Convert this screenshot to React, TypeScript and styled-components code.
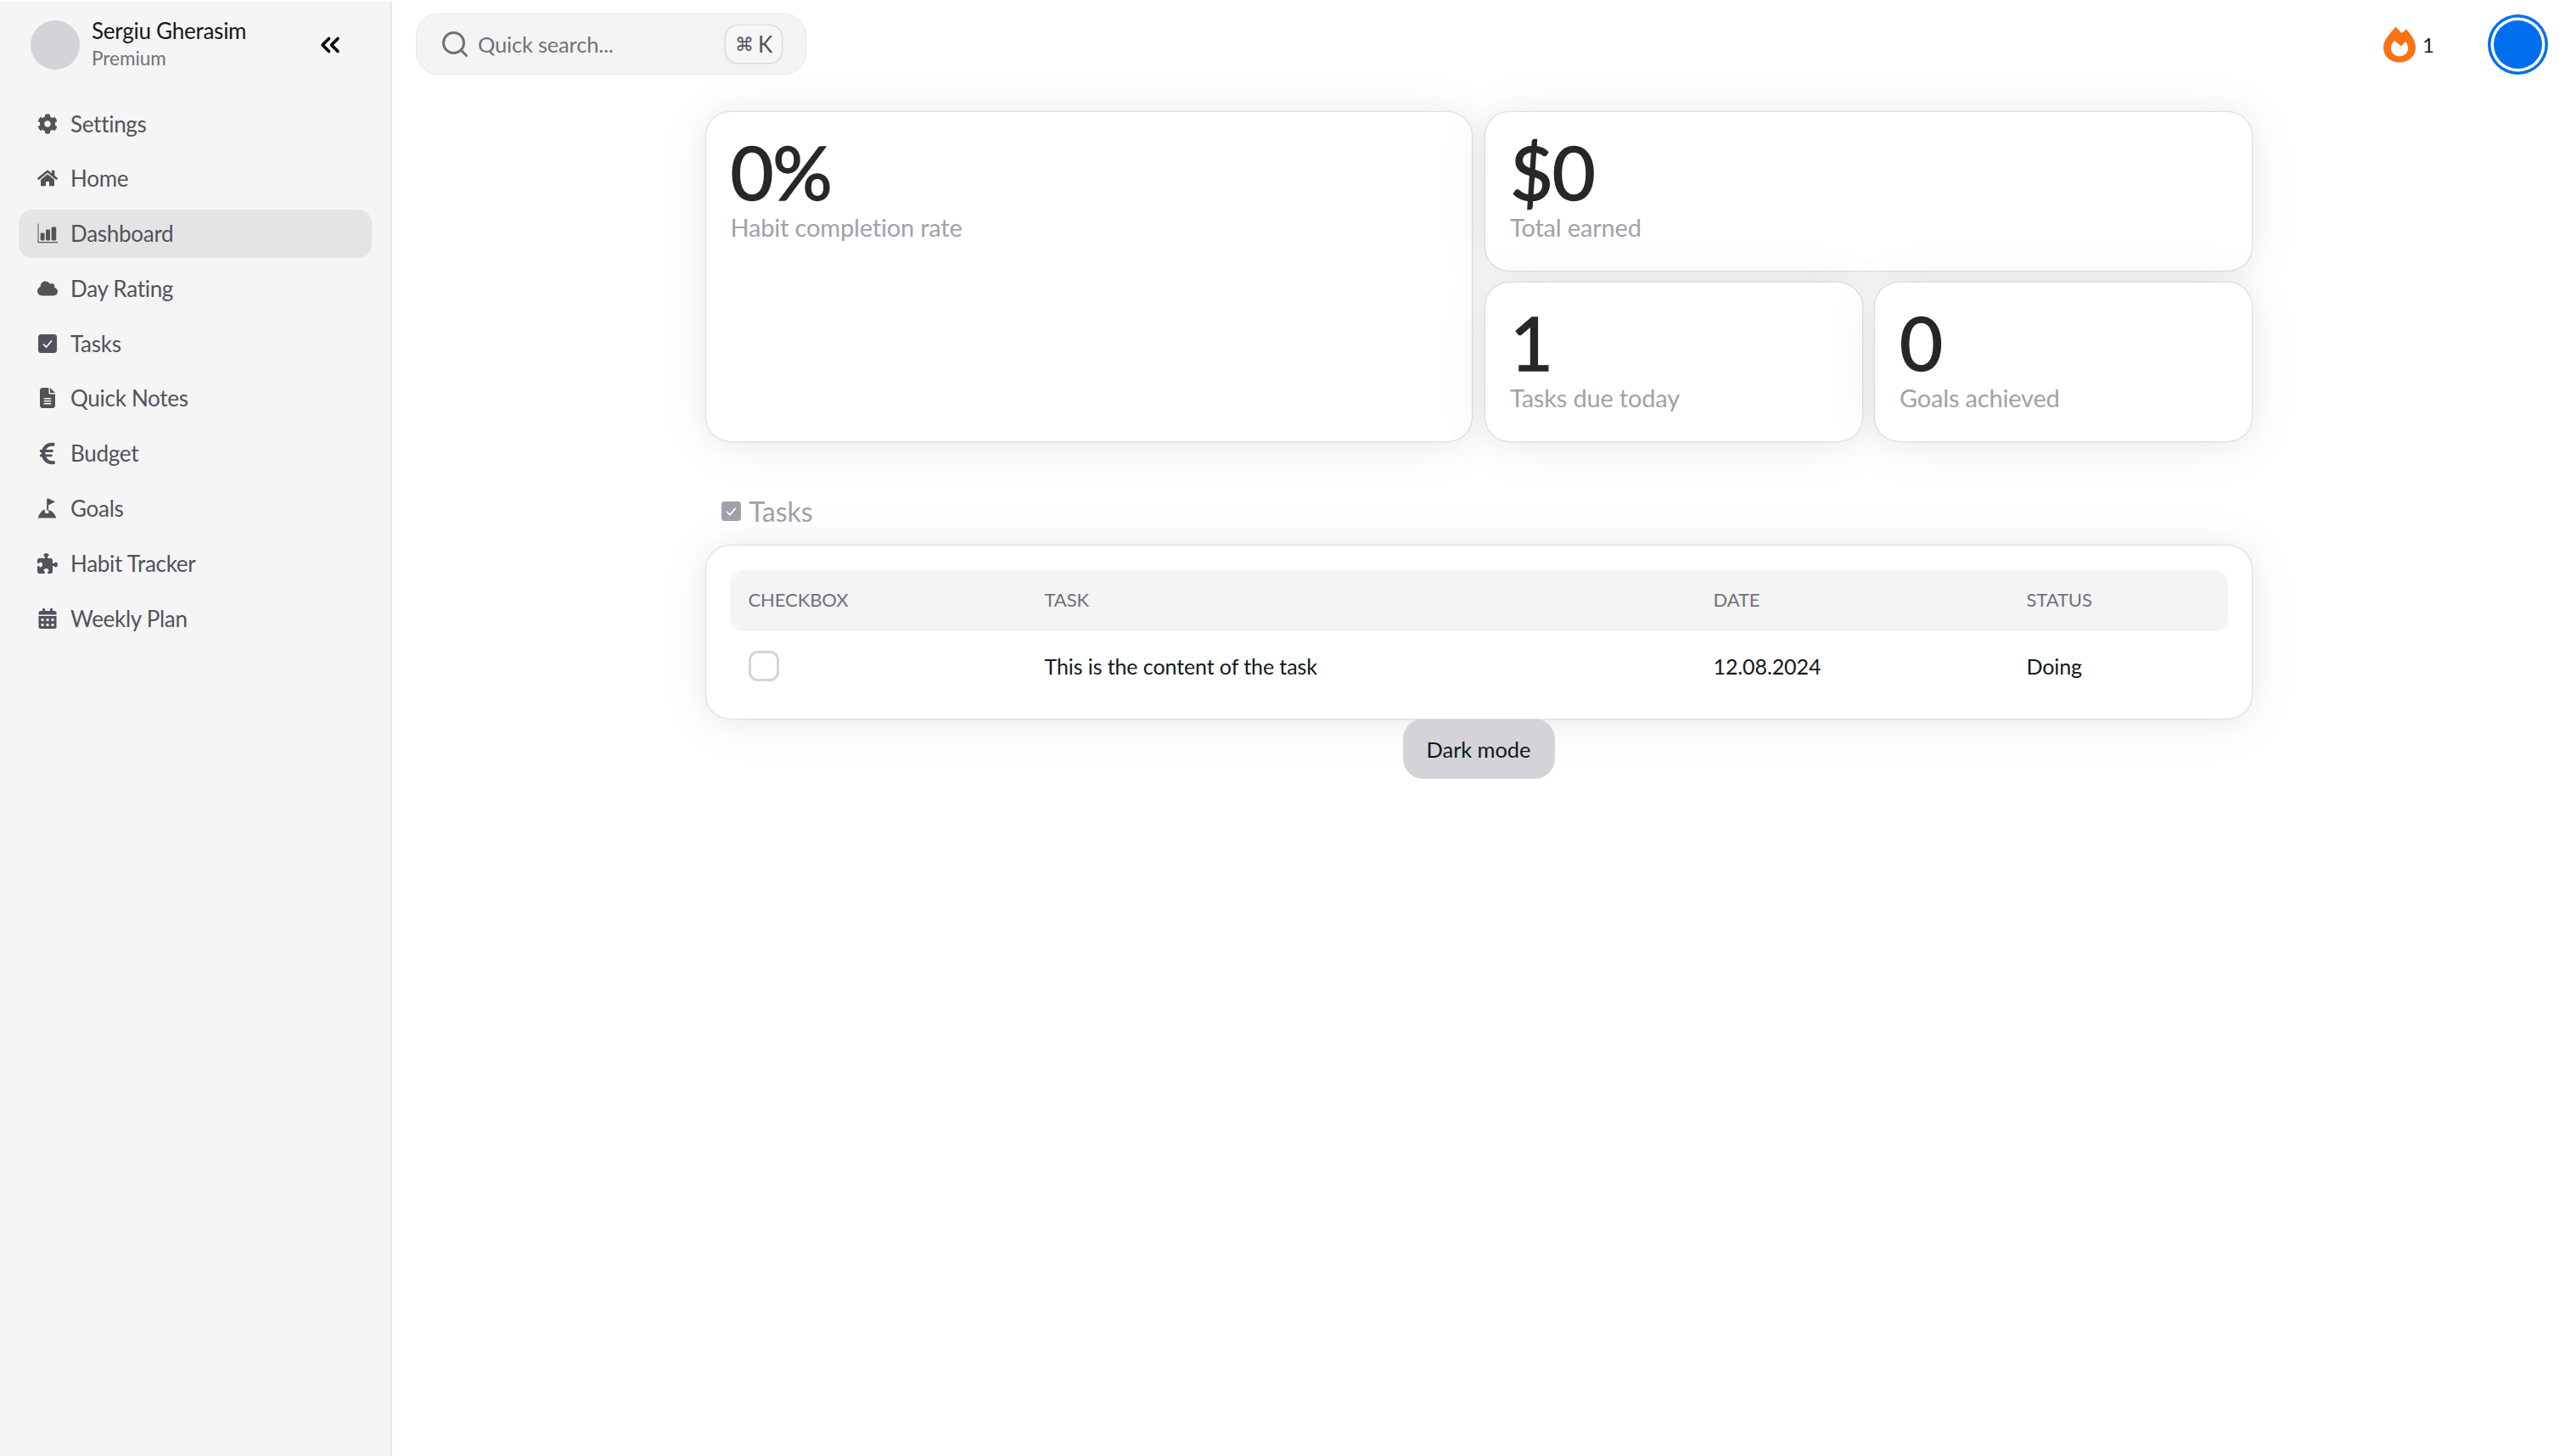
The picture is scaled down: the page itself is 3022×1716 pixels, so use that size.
import React from "react";
import styled, { createGlobalStyle } from "styled-components";
import { ChevronsLeft, Search } from "lucide-react";
import {
  FaCog,
  FaHome,
  FaCloud,
  FaEuroSign,
  FaCalendarAlt,
} from "react-icons/fa";
import { FaPuzzlePiece, FaFileLines } from "react-icons/fa6";

const Global = createGlobalStyle`
  html, body { margin: 0; padding: 0; background: #fff; }
  body { font-family: Lato, "Open Sans", sans-serif; color: #11181c; }
  * { box-sizing: border-box; }
`;

const Page = styled.div`
  display: flex;
  height: 1716px;
  overflow: hidden;
  background: #fff;
`;

const Sidebar = styled.aside`
  width: 462px;
  flex: none;
  margin-top: 2px;
  padding: 22px 22px 0;
  background: #f5f5f5;
  border-right: 2px solid #e9e9ec;
`;

const Profile = styled.div`
  display: flex;
  align-items: center;
  height: 58px;
  padding-left: 14px;
`;

const ProfileAvatar = styled.div`
  width: 58px;
  height: 58px;
  border-radius: 50%;
  background: #d4d4d8;
  flex: none;
`;

const ProfileText = styled.div`
  margin-left: 14px;
  width: 265px;
  flex: none;
`;

const ProfileName = styled.div`
  font-size: 26px;
  line-height: 31px;
  letter-spacing: -0.25px;
  color: #18181b;
`;

const ProfileRole = styled.div`
  font-size: 22.5px;
  line-height: 33px;
  color: #71717a;
`;

const Collapse = styled.button`
  border: 0;
  padding: 0;
  background: none;
  color: #000;
  display: flex;
  margin-left: -2px;
`;

const Nav = styled.nav`
  margin-top: 35px;
  display: flex;
  flex-direction: column;
  gap: 7.8px;
`;

const NavItem = styled.div<{ $active?: boolean }>`
  display: flex;
  align-items: center;
  height: 57px;
  padding-left: 22px;
  border-radius: 16px;
  font-size: 26px;
  letter-spacing: -0.28px;
  color: #52525b;
  background: ${(p) => (p.$active ? "#e4e4e4" : "transparent")};
`;

const NavIcon = styled.span`
  width: 24px;
  margin-right: 15px;
  display: flex;
  justify-content: center;
  color: #52525b;
  font-size: 24px;
`;

const Main = styled.main`
  flex: 1;
  min-width: 0;
  display: flex;
  flex-direction: column;
`;

const Header = styled.header`
  display: flex;
  align-items: center;
  justify-content: space-between;
  height: 72px;
  margin-top: 16px;
  padding: 0 20px 0 28px;
`;

const SearchBox = styled.div`
  width: 460px;
  height: 72px;
  display: flex;
  align-items: center;
  padding: 0 28px 0 27px;
  background: #f4f4f5;
  border: 1.5px solid #e7e7ea;
  border-radius: 26px;
  color: #71717a;
  font-size: 25.5px;
  letter-spacing: -0.2px;
`;

const SearchText = styled.span`
  margin-left: 9px;
  flex: 1;
`;

const Kbd = styled.kbd`
  width: 66px;
  height: 44px;
  display: flex;
  align-items: center;
  justify-content: center;
  gap: 5px;
  background: #f6f6f7;
  border-radius: 14px;
  font-family: "DejaVu Sans", Lato, sans-serif;
  font-size: 22px;
  color: #52525b;
  box-shadow: 0 0 2px rgba(0, 0, 0, 0.3), 0 1px 4px rgba(0, 0, 0, 0.06);
`;

const KbdKey = styled.span`
  font-family: Lato, sans-serif;
  font-size: 26px;
`;

const HeaderRight = styled.div`
  display: flex;
  align-items: center;
`;

const Streak = styled.div`
  display: flex;
  align-items: center;
  gap: 8px;
  font-size: 24px;
  color: #18181b;
  margin-right: 63px;
`;

const UserRing = styled.div`
  width: 57px;
  height: 57px;
  margin: 7px;
  border-radius: 50%;
  background: #006fee;
  box-shadow: 0 0 0 3.5px #fff, 0 0 0 7px #006fee;
`;

const Content = styled.div`
  width: 1821px;
  align-self: center;
  margin-top: 44px;
  display: flex;
  flex-direction: column;
`;

const Stats = styled.section`
  display: grid;
  grid-template-columns: 902.5px 902.5px;
  gap: 16px;
`;

const Card = styled.div`
  background: #fff;
  border-radius: 28px;
  box-shadow: 0 0 30px rgba(0, 0, 0, 0.03), 0 4px 60px rgba(0, 0, 0, 0.08),
    0 0 2px rgba(0, 0, 0, 0.3);
`;

const StatCard = styled(Card)<{ $height: number }>`
  padding: 18px 28px 0 29px;
  height: ${(p) => p.$height}px;
`;

const StatStack = styled.div`
  display: flex;
  flex-direction: column;
  gap: 14px;
`;

const StatPair = styled.div`
  display: grid;
  grid-template-columns: 444px 444px;
  gap: 15px;
`;

const StatValue = styled.div`
  font-size: 88px;
  line-height: 104px;
  color: #27272a;
  -webkit-text-stroke: 1.4px #27272a;
  letter-spacing: -1.2px;
`;

const StatLabel = styled.div`
  font-size: 29px;
  line-height: 36px;
  margin-top: -4px;
  letter-spacing: -0.18px;
  color: #a1a1aa;
`;

const SectionTitle = styled.h2`
  margin: 61px 0 19px 17px;
  height: 43px;
  display: flex;
  align-items: center;
  gap: 9px;
  font-size: 32px;
  font-weight: 400;
  color: #a1a1aa;
`;

const TableCard = styled(Card)`
  padding: 29px 28px;
  height: 204px;
`;

const TableRow = styled.div`
  display: grid;
  grid-template-columns: 349px 788px 369px 1fr;
  align-items: center;
`;

const HeadRow = styled(TableRow)`
  height: 72px;
  padding-bottom: 3px;
  background: #f4f4f5;
  border-radius: 16px;
  font-size: 22px;
  letter-spacing: -0.1px;
  color: #71717a;
`;

const BodyRow = styled(TableRow)`
  height: 82px;
  font-size: 25px;
  letter-spacing: -0.1px;
  color: #11181c;
`;

const Cell = styled.div`
  padding-left: 22px;
`;

const Check = styled.div`
  width: 36px;
  height: 36px;
  border: 3px solid #d4d4d8;
  border-radius: 11px;
`;

const DarkButton = styled.button`
  align-self: center;
  width: 179px;
  height: 71px;
  border: 0;
  border-radius: 24px;
  background: #d4d4d8;
  font-family: Lato, sans-serif;
  font-size: 25.5px;
  letter-spacing: -0.1px;
  color: #11181c;
`;

const CheckSquareIcon = ({ size = 24 }: { size?: number }) => (
  <svg width={size} height={size} viewBox="0 0 24 24">
    <rect x="1" y="1" width="22" height="22" rx="3.5" fill="currentColor" />
    <path d="M7 12.5 L10.5 16 L17 8.5" fill="none" stroke="#fff" strokeWidth="1.6" />
  </svg>
);

const ChartIcon = () => (
  <svg width="24" height="24" viewBox="0 0 24 24" fill="currentColor">
    <path d="M0.5 0.5 H1.5 V22 H24 V23.2 H0.5 Z" />
    <rect x="3.6" y="11.5" width="5" height="9" rx="1.4" />
    <rect x="10" y="7.5" width="5" height="13" rx="1.4" />
    <rect x="16.6" y="4.5" width="5.6" height="16" rx="1.4" />
  </svg>
);

const GolfIcon = () => (
  <svg width="24" height="24" viewBox="0 0 24 24" fill="currentColor">
    <path d="M11.2 0.5 L13 0.5 L21 4.2 L13 8.4 L13 14.6 L11.2 14.6 Z" />
    <path d="M8.8 13.6 L8.8 16.8 C8.8 18.2 13 18.6 13.6 17 C13.8 16.4 13.4 15.8 13 15.6 L13 14.2 C17 14.8 20 17.4 22.4 23.5 L0.6 23.5 C2.4 18.6 5 14.8 8.8 13.6 Z" />
  </svg>
);

const Flame = () => (
  <svg width="38" height="43" viewBox="0 0 38 43">
    <path
      fillRule="evenodd"
      fill="#f97316"
      d="M14.5 0.5 L21.5 8 L27 3.5 C33 10 38 17 38 25 C38 35.5 29.5 42.5 19 42.5 C8.5 42.5 0 35.5 0 25 C0 16 8 8.5 14.5 0.5 Z M13 17 C10 20 9 23 9 26 C9 31.5 14 35.5 19 35.5 C24 35.5 29 31.5 29 26 C29 23 28 20 26 18 L21 23.5 Z"
    />
  </svg>
);

const items: { label: string; icon: React.ReactNode; active?: boolean }[] = [
  { label: "Settings", icon: <FaCog /> },
  { label: "Home", icon: <FaHome /> },
  { label: "Dashboard", icon: <ChartIcon />, active: true },
  { label: "Day Rating", icon: <FaCloud /> },
  { label: "Tasks", icon: <CheckSquareIcon /> },
  { label: "Quick Notes", icon: <FaFileLines /> },
  { label: "Budget", icon: <FaEuroSign size={29} /> },
  { label: "Goals", icon: <GolfIcon /> },
  { label: "Habit Tracker", icon: <FaPuzzlePiece /> },
  { label: "Weekly Plan", icon: <FaCalendarAlt /> },
];

export default function App() {
  return (
    <>
      <Global />
      <Page>
        <Sidebar>
          <Profile>
            <ProfileAvatar />
            <ProfileText>
              <ProfileName>Sergiu Gherasim</ProfileName>
              <ProfileRole>Premium</ProfileRole>
            </ProfileText>
            <Collapse aria-label="Collapse">
              <ChevronsLeft size={36} strokeWidth={2.4} />
            </Collapse>
          </Profile>
          <Nav>
            {items.map((it) => (
              <NavItem key={it.label} $active={it.active}>
                <NavIcon>{it.icon}</NavIcon>
                {it.label}
              </NavItem>
            ))}
          </Nav>
        </Sidebar>
        <Main>
          <Header>
            <SearchBox>
              <Search size={36} strokeWidth={2} />
              <SearchText>Quick search...</SearchText>
              <Kbd>
                ⌘<KbdKey>K</KbdKey>
              </Kbd>
            </SearchBox>
            <HeaderRight>
              <Streak>
                <Flame />1
              </Streak>
              <UserRing />
            </HeaderRight>
          </Header>
          <Content>
            <Stats>
              <StatCard $height={388}>
                <StatValue>0%</StatValue>
                <StatLabel>Habit completion rate</StatLabel>
              </StatCard>
              <StatStack>
                <StatCard $height={187}>
                  <StatValue>$0</StatValue>
                  <StatLabel>Total earned</StatLabel>
                </StatCard>
                <StatPair>
                  <StatCard $height={187}>
                    <StatValue>1</StatValue>
                    <StatLabel>Tasks due today</StatLabel>
                  </StatCard>
                  <StatCard $height={187}>
                    <StatValue>0</StatValue>
                    <StatLabel>Goals achieved</StatLabel>
                  </StatCard>
                </StatPair>
              </StatStack>
            </Stats>
            <SectionTitle>
              <CheckSquareIcon size={25} />
              Tasks
            </SectionTitle>
            <TableCard>
              <HeadRow>
                <Cell>CHECKBOX</Cell>
                <Cell>TASK</Cell>
                <Cell>DATE</Cell>
                <Cell>STATUS</Cell>
              </HeadRow>
              <BodyRow>
                <Cell>
                  <Check />
                </Cell>
                <Cell>This is the content of the task</Cell>
                <Cell>12.08.2024</Cell>
                <Cell>Doing</Cell>
              </BodyRow>
            </TableCard>
            <DarkButton>Dark mode</DarkButton>
          </Content>
        </Main>
      </Page>
    </>
  );
}
